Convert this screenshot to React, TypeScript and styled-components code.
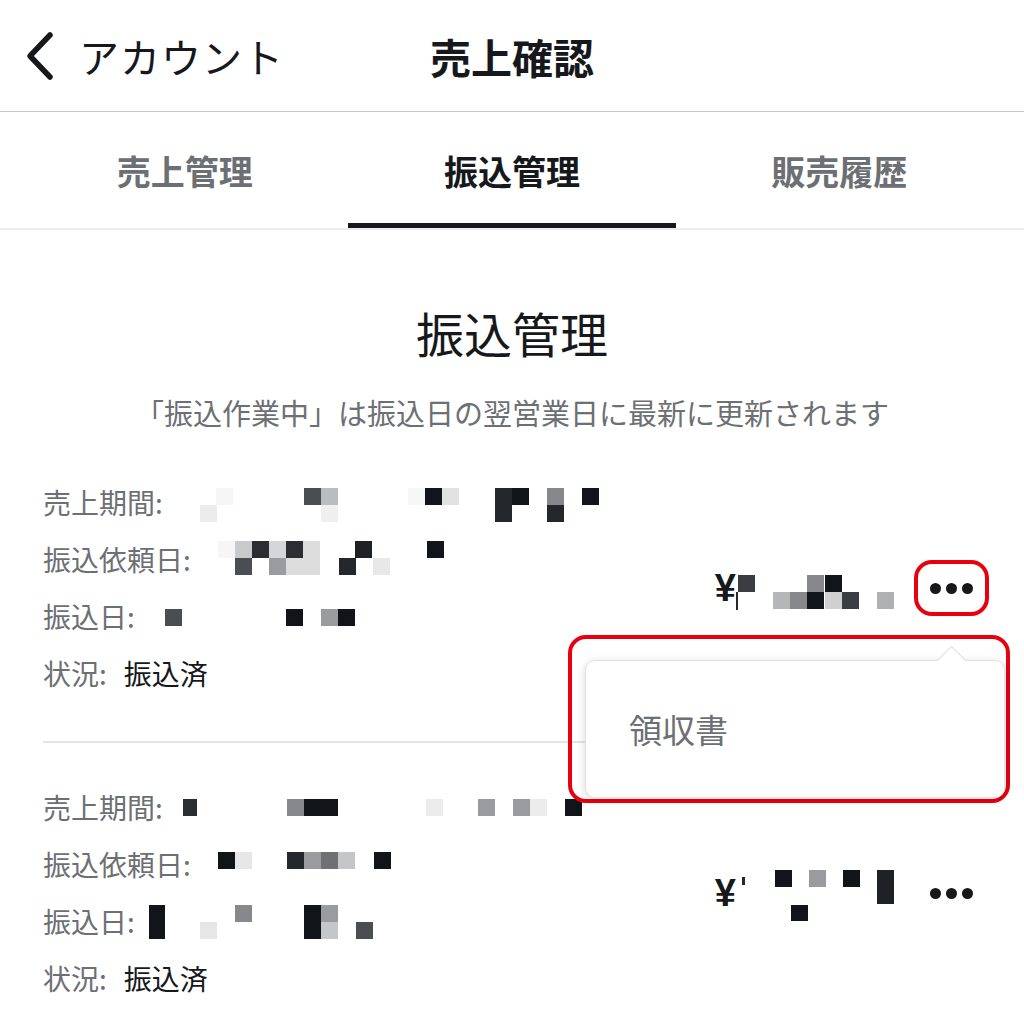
import React from 'react';
import styled, { createGlobalStyle } from 'styled-components';

const RED = '#e8000e';

const GlobalStyle = createGlobalStyle`
    body {
        margin: 0;
        background: #ffffff;
        font-family: "Noto Sans CJK JP", "Noto Sans", sans-serif;
        color: #16181b;
    }
`;

const Page = styled.div`
    width: 1024px;
    height: 1024px;
    overflow: hidden;
    background: #ffffff;
`;

const Header = styled.header`
    height: 111px;
    display: grid;
    grid-template-columns: 1fr auto 1fr;
    align-items: center;
    border-bottom: 1px solid #c9c9cb;
`;

const Back = styled.div`
    display: flex;
    align-items: center;
    padding-left: 24px;
    color: #16181b;
`;

const BackLabel = styled.span`
    margin-left: 23px;
    font-size: 40px;
    font-weight: 400;
    letter-spacing: 1px;
`;

const HeaderTitle = styled.h1`
    margin: 0;
    font-size: 41px;
    font-weight: 700;
    color: #16181b;
`;

const Tabs = styled.nav`
    display: flex;
    padding: 0 21px;
    height: 116px;
    border-bottom: 2px solid #ececec;
`;

const Tab = styled.div<{ $active?: boolean }>`
    flex: 1;
    display: flex;
    align-items: center;
    justify-content: center;
    position: relative;
    font-size: 34px;
    font-weight: 700;
    color: ${(p) => (p.$active ? '#16181b' : '#6c6f73')};
    &::after {
        content: '';
        display: ${(p) => (p.$active ? 'block' : 'none')};
        position: absolute;
        left: 0;
        right: 0;
        bottom: 0;
        height: 5px;
        background: #16181b;
    }
`;

const SectionTitle = styled.h2`
    margin: 73px 0 0;
    text-align: center;
    font-size: 48px;
    line-height: 58px;
    font-weight: 400;
    color: #16181b;
`;

const Note = styled.p`
    margin: 33px 0 0;
    text-align: center;
    font-size: 29px;
    line-height: 36px;
    color: #6c6f73;
`;

const Record = styled.section<{ $first?: boolean }>`
    display: flex;
    align-items: center;
    padding: ${(p) => (p.$first ? '44px 35px 39px 43px' : '36px 35px 0 43px')};
`;

const InfoList = styled.div`
    flex: 1;
    display: flex;
    flex-direction: column;
`;

const InfoRow = styled.div`
    display: grid;
    height: 57px;
    & > * {
        grid-area: 1 / 1;
    }
`;

const Label = styled.span`
    font-size: 28px;
    line-height: 57px;
    color: #6c6f73;
    white-space: nowrap;
`;

const Status = styled.span`
    margin-left: 17px;
    color: #16181b;
`;

const RowMosaic = styled.svg`
    display: block;
    pointer-events: none;
`;

const Divider = styled.hr`
    margin: 0 43px;
    border: none;
    height: 2px;
    background: #e3e3e3;
`;

const PriceArea = styled.div`
    display: flex;
    align-items: center;
`;

const Yen = styled.span`
    font-family: "Liberation Sans", Arial, sans-serif;
    font-size: 38px;
    font-weight: 700;
    line-height: 1;
    color: #16181b;
`;

const PriceMosaic = styled.svg`
    display: block;
`;

const DotsWrap = styled.div`
    position: relative;
    margin-left: 13px;
`;

const DotsButton = styled.div<{ $marked?: boolean }>`
    box-sizing: border-box;
    width: 75px;
    height: 56px;
    border: 4px solid ${(p) => (p.$marked ? RED : 'transparent')};
    border-radius: 18px;
    display: flex;
    align-items: center;
    justify-content: center;
    gap: 5px;
`;

const Dot = styled.span`
    width: 11px;
    height: 11px;
    border-radius: 50%;
    background: #16181b;
`;

const Annotation = styled.div`
    position: absolute;
    top: calc(100% + 19px);
    right: -21px;
    width: 442px;
    height: 168px;
    box-sizing: border-box;
    border: 4px solid ${RED};
    border-radius: 18px;
    padding: 21px 1px 1px 13px;
    display: flex;
    z-index: 2;
`;

const Menu = styled.div`
    flex: 1;
    position: relative;
    display: flex;
    align-items: center;
    padding-left: 43px;
    background: #ffffff;
    border: 1px solid #e2e2e2;
    border-radius: 10px;
    box-shadow: 0 2px 8px rgba(0, 0, 0, 0.16);
    &::before {
        content: '';
        position: absolute;
        top: -11px;
        left: 355px;
        width: 20px;
        height: 20px;
        background: #ffffff;
        border-top: 1px solid #dcdcdc;
        border-left: 1px solid #dcdcdc;
        transform: rotate(45deg);
    }
`;

const MenuItem = styled.span`
    position: relative;
    font-size: 33px;
    color: #6c6f73;
`;

type Cell = [number, number, string, number?, number?];

interface RowData {
    label: string;
    top: number;
    cells: Cell[];
    status?: string;
}

interface RecordData {
    rows: RowData[];
    priceTop: number;
    priceCells: Cell[];
    marked?: boolean;
}

const records: RecordData[] = [
    {
        marked: true,
        priceTop: 560,
        priceCells: [
            [738, 575, '#3a3d41'],
            [736, 592, '#24272b', 2, 18],
            [773, 592, '#b5b6b8'],
            [790, 592, '#86888c'],
            [807, 575, '#86888c'],
            [807, 592, '#111418'],
            [825, 575, '#111418'],
            [825, 592, '#cfd0d2'],
            [842, 592, '#3a3d41'],
            [877, 592, '#b0b1b3'],
        ],
        rows: [
            {
                label: '売上期間:',
                top: 474,
                cells: [
                    [200, 505, '#ececec'], [216, 488, '#f5f5f5'], [304, 488, '#4a4d52'],
                    [321, 488, '#bbbcbe'], [321, 505, '#efefef'], [408, 488, '#f7f7f7'],
                    [425, 488, '#111418'], [442, 488, '#e2e2e3'], [495, 488, '#24272b'],
                    [495, 505, '#24272b'], [512, 488, '#111418'], [547, 488, '#86888c'],
                    [547, 505, '#24272b'], [582, 488, '#111418'],
                ],
            },
            {
                label: '振込依頼日:',
                top: 531,
                cells: [
                    [218, 541, '#f6f6f6'], [235, 541, '#c9cacc'], [235, 558, '#4a4d52'],
                    [252, 541, '#2a2d31'], [269, 541, '#d5d6d8'], [269, 558, '#9a9b9e'],
                    [286, 541, '#2a2d31'], [286, 558, '#dcdcdd'], [303, 541, '#dcdcdd'],
                    [303, 558, '#dcdcdd'], [339, 558, '#24272b'], [355, 541, '#1e2125'],
                    [373, 558, '#e8e8e8'], [427, 541, '#111418'],
                ],
            },
            {
                label: '振込日:',
                top: 588,
                cells: [
                    [165, 609, '#4a4d52'], [286, 609, '#111418'],
                    [321, 609, '#9a9b9e'], [338, 609, '#111418'],
                ],
            },
            { label: '状況:', top: 645, cells: [], status: '振込済' },
        ],
    },
    {
        priceTop: 865,
        priceCells: [
            [742, 877, '#24272b', 3, 8],
            [775, 870, '#111418'],
            [791, 905, '#111418'],
            [809, 870, '#9a9b9e'],
            [843, 870, '#111418'],
            [877, 870, '#1e2125', 17, 34],
        ],
        rows: [
            {
                label: '売上期間:',
                top: 779,
                cells: [
                    [183, 799, '#2a2d31', 14], [287, 799, '#86888c'], [304, 799, '#111418'],
                    [321, 799, '#111418'], [426, 799, '#ececec'], [478, 799, '#9a9b9e'],
                    [513, 799, '#9a9b9e'], [530, 799, '#ececec'], [565, 799, '#111418'],
                ],
            },
            {
                label: '振込依頼日:',
                top: 836,
                cells: [
                    [218, 852, '#111418'], [235, 852, '#e6e6e6'], [287, 852, '#24272b'],
                    [304, 852, '#9a9b9e'], [321, 852, '#6e7074'], [338, 852, '#c5c6c8'],
                    [374, 852, '#111418'],
                ],
            },
            {
                label: '振込日:',
                top: 893,
                cells: [
                    [149, 905, '#111418', 16, 34], [200, 922, '#e6e6e6'], [235, 905, '#86888c'],
                    [304, 905, '#111418'], [304, 922, '#111418'], [321, 905, '#9a9b9e'],
                    [321, 922, '#c5c6c8'], [356, 922, '#4a4d52'],
                ],
            },
            { label: '状況:', top: 950, cells: [], status: '振込済' },
        ],
    },
];

const Cells: React.FC<{ cells: Cell[] }> = ({ cells }) => (
    <>
        {cells.map(([x, y, fill, w = 17, h = 17], i) => (
            <rect key={i} x={x} y={y} width={w} height={h} fill={fill} />
        ))}
    </>
);

const Chevron = () => (
    <svg width="32" height="50" viewBox="0 0 32 50">
        <polyline
            points="26,4 6,25 26,46"
            fill="none"
            stroke="#16181b"
            strokeWidth="5.5"
            strokeLinecap="round"
            strokeLinejoin="round"
        />
    </svg>
);

const tabs = ['売上管理', '振込管理', '販売履歴'];

const TransferRecord: React.FC<{ data: RecordData; first?: boolean }> = ({ data, first }) => (
    <Record $first={first}>
        <InfoList>
            {data.rows.map((row) => (
                <InfoRow key={row.label}>
                    <Label>
                        {row.label}
                        {row.status && <Status>{row.status}</Status>}
                    </Label>
                    {row.cells.length > 0 && (
                        <RowMosaic width="620" height="57" viewBox={`43 ${row.top} 620 57`}>
                            <Cells cells={row.cells} />
                        </RowMosaic>
                    )}
                </InfoRow>
            ))}
        </InfoList>
        <PriceArea>
            <Yen>¥</Yen>
            <PriceMosaic width="165" height="56" viewBox={`736 ${data.priceTop} 165 56`}>
                <Cells cells={data.priceCells} />
            </PriceMosaic>
            <DotsWrap>
                <DotsButton $marked={data.marked}>
                    <Dot />
                    <Dot />
                    <Dot />
                </DotsButton>
                {data.marked && (
                    <Annotation>
                        <Menu>
                            <MenuItem>領収書</MenuItem>
                        </Menu>
                    </Annotation>
                )}
            </DotsWrap>
        </PriceArea>
    </Record>
);

const App: React.FC = () => {
    return (
        <Page>
            <GlobalStyle />
            <Header>
                <Back>
                    <Chevron />
                    <BackLabel>アカウント</BackLabel>
                </Back>
                <HeaderTitle>売上確認</HeaderTitle>
                <span />
            </Header>
            <Tabs>
                {tabs.map((t) => (
                    <Tab key={t} $active={t === '振込管理'}>{t}</Tab>
                ))}
            </Tabs>
            <SectionTitle>振込管理</SectionTitle>
            <Note>「振込作業中」は振込日の翌営業日に最新に更新されます</Note>
            <TransferRecord data={records[0]} first />
            <Divider />
            <TransferRecord data={records[1]} />
        </Page>
    );
};

export default App;
